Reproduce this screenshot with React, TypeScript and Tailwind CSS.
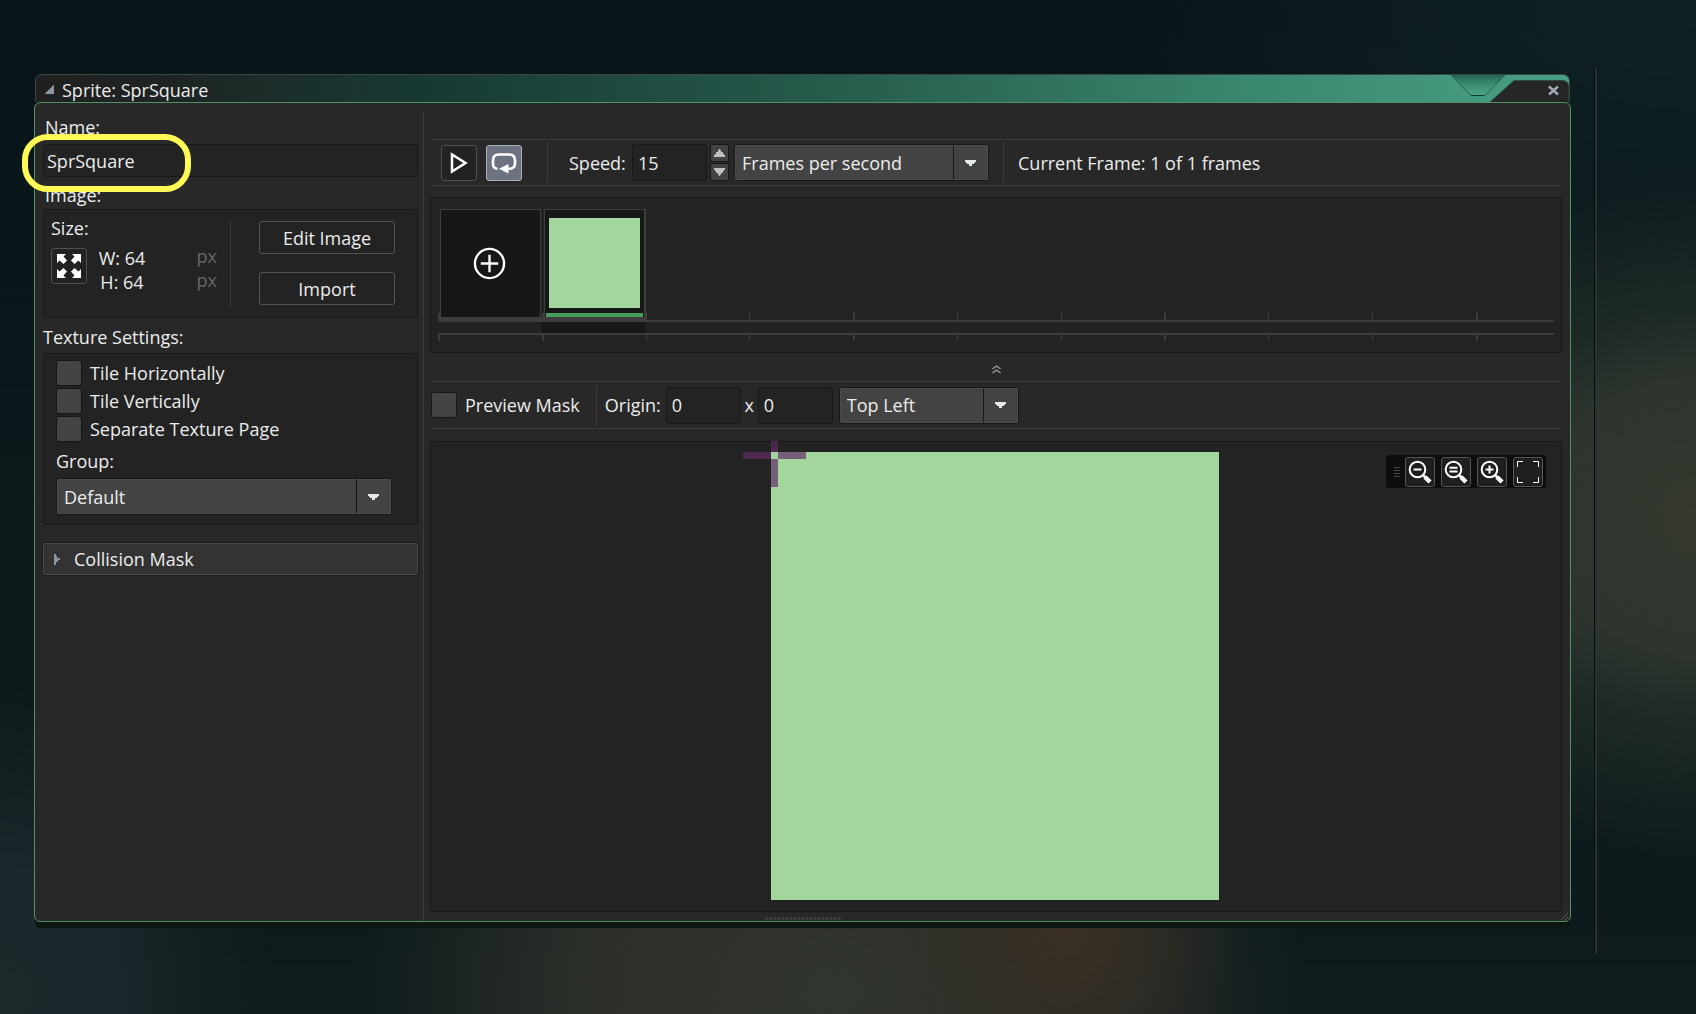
import type { ReactNode } from "react";

const inset = "rounded-[3px] border border-[#181818] bg-[#232323]";

function Arrow() {
  return (
    <svg width="11" height="6" viewBox="0 0 11 6" fill="#e3e9e8" aria-hidden="true">
      <path d="M0 0H11V2H10V3H9V4H7V6H4V4H2V3H1V2H0Z" />
    </svg>
  );
}

function Dropdown({ label, options, className }: { label: string; options: string[]; className: string }) {
  return (
    <div className={`relative flex h-[37px] rounded-[3px] border border-[#181818] bg-[#434343] ${className}`}>
      <select
        aria-label={label}
        className="w-full appearance-none rounded-[2px] border border-[#4c4c4c] bg-transparent pr-9 pl-1.5 text-lg outline-none"
      >
        {options.map((o) => (
          <option key={o}>{o}</option>
        ))}
      </select>
      <span className="pointer-events-none absolute inset-y-0 right-0 flex w-[35px] items-center justify-center rounded-r-[2px] border border-l-[#181818] border-[#4c4c4c]">
        <Arrow />
      </span>
    </div>
  );
}

function Check({ label }: { label: string }) {
  return (
    <label className="flex items-center gap-2 leading-7">
      <input
        type="checkbox"
        className="size-[26px] shrink-0 appearance-none rounded-[3px] border border-[#171717] bg-[#434544] checked:bg-[#6c7280]"
      />
      {label}
    </label>
  );
}

function IconButton({ label, active, children }: { label: string; active?: boolean; children: ReactNode }) {
  return (
    <button
      aria-label={label}
      aria-pressed={active}
      className={`flex size-9 items-center justify-center rounded-[3px] border ${
        active ? "border-[#a9adb5] bg-[#6c7280]" : "border-[#505050] bg-[#222222]"
      }`}
    >
      {children}
    </button>
  );
}

function ToolButton({ label, children }: { label: string; children: ReactNode }) {
  return (
    <button
      aria-label={label}
      className="flex size-[30px] items-center justify-center rounded-[3px] border border-[#555555] bg-[#1f1f1f]"
    >
      {children}
    </button>
  );
}

function Magnifier({ children }: { children: ReactNode }) {
  return (
    <svg width="24" height="24" viewBox="0 0 24 24" fill="none" stroke="#fff" strokeWidth="2" aria-hidden="true">
      <circle cx="9.5" cy="9.5" r="7.8" />
      <path d="M15 15L18 18" strokeWidth="2.5" />
      <path d="M17 17L22 22" strokeWidth="4.5" />
      {children}
    </svg>
  );
}

function Separator({ className }: { className: string }) {
  return <span className={`h-[39px] w-px bg-[#3c3c3c] ${className}`} />;
}

function Ruler() {
  const ticks = Array.from({ length: 11 }, (_, i) => ({
    x: Math.round(i * 103.75),
    w: i % 3 === 1 || i === 0 ? 2 : 1,
  }));
  return (
    <svg className="-mt-[5px] h-[28px] w-full" fill="#3d3d3d" aria-hidden="true">
      <rect x="104" y="9" width="104" height="11" fill="#171717" />
      <rect y="5" width="208" height="4" />
      <rect y="7" width="100%" height="2" />
      <rect y="20" width="100%" height="2" />
      {ticks.map((t) => (
        <g key={t.x}>
          <rect x={t.x} y="0" width={t.w} height="7" />
          <rect x={t.x} y="21" width={t.w} height="7" />
        </g>
      ))}
    </svg>
  );
}

function TitleBar() {
  return (
    <header className="relative mx-px flex h-7 items-center overflow-hidden rounded-t-[7px] border border-b-0 border-[#3c4543] bg-[linear-gradient(90deg,#202020_0%,#1e2423_8%,#183a34_26%,#28604f_55%,#3b8870_80%,#47a083_100%)] pt-[2px] pl-[9px]">
      <svg width="9" height="9" viewBox="0 0 9 9" fill="#8b94a1" aria-hidden="true">
        <path d="M8 0H9V9H0V8H1V7H2V6H3V5H4V4H5V3H6V2H7V1H8Z" />
      </svg>
      <h1 className="ml-2 text-lg leading-7">Sprite: SprSquare</h1>
      <svg className="absolute top-0 right-0" width="120" height="28" viewBox="0 0 120 28" aria-hidden="true">
        <defs>
          <linearGradient id="notch" x1="0" y1="0" x2="0" y2="1">
            <stop offset="0" stopColor="#256552" />
            <stop offset="0.45" stopColor="#3b8c72" />
            <stop offset="1" stopColor="#4aa587" />
          </linearGradient>
        </defs>
        <path d="M2 0L22 20.500H36L56 0Z" fill="url(#notch)" stroke="#256350" />
        <path d="M22 20.500H35" stroke="#10382c" />
        <path d="M40 28L65 5.500H113Q119 5.500 120 11V28Z" fill="#272627" stroke="#2f4b42" />
      </svg>
      <button aria-label="Close" className="absolute top-[10px] right-[10px]">
        <svg width="11" height="11" viewBox="0 0 11 11" stroke="#a3a8b4" strokeWidth="2.4" aria-hidden="true">
          <path d="M1 1.500L10 9.500M10 1.500L1 9.500" />
        </svg>
      </button>
    </header>
  );
}

function Sidebar() {
  return (
    <aside className="flex w-[389px] shrink-0 flex-col border-r border-[#3c3c3c] pr-[5px] pl-2">
      <label htmlFor="sprite-name" className="mt-[2px] ml-[2px] h-7 leading-7">
        Name:
      </label>
      <div className="relative mt-[3px]">
        <input
          id="sprite-name"
          defaultValue="SprSquare"
          className={`h-[33px] w-full px-[3px] outline-none ${inset}`}
        />
        <span className="pointer-events-none absolute -top-[10px] -left-[21px] h-[58px] w-[169px] rounded-[26px] border-6 border-[#fffa55]" />
      </div>
      <h2 className="ml-[2px] h-8 leading-9">Image:</h2>
      <section className={`flex h-[109px] ${inset}`}>
        <div className="my-[10px] w-[187px] border-r border-[#3c3c3c] pl-[7px]">
          <p className="-mt-1 leading-6">Size:</p>
          <div className="mt-2 flex gap-[11px]">
            <IconButton label="Resize sprite">
              <svg width="26" height="26" viewBox="0 0 26 26" fill="#fff" aria-hidden="true">
                {[0, 90, 180, 270].map((r) => (
                  <path key={r} transform={`rotate(${r} 13 13)`} d="M1 1H10L7.500 3.500L11 7.500L7.500 11L3.500 7.500L1 10Z" />
                ))}
              </svg>
            </IconButton>
            <dl className="-mt-[2px] grid flex-1 grid-cols-[48px_1fr] text-center leading-6">
              <dt>W: 64</dt>
              <dd className="pr-[13px] text-right leading-5 text-[#666666]">px</dd>
              <dt>H: 64</dt>
              <dd className="pr-[13px] text-right leading-5 text-[#666666]">px</dd>
            </dl>
          </div>
        </div>
        <div className="flex flex-1 flex-col gap-[18px] pt-[11px] pl-7">
          <button className="h-[33px] w-[136px] rounded-[3px] border border-[#555555]">Edit Image</button>
          <button className="h-[33px] w-[136px] rounded-[3px] border border-[#555555]">Import</button>
        </div>
      </section>
      <h2 className="h-[35px] leading-[38px]">Texture Settings:</h2>
      <section className={`h-[172px] pt-[5px] pl-3 ${inset}`}>
        <Check label="Tile Horizontally" />
        <Check label="Tile Vertically" />
        <Check label="Separate Texture Page" />
        <p className="h-[35px] leading-9">Group:</p>
        <Dropdown label="Group" options={["Default"]} className="w-[336px]" />
      </section>
      <button className="mt-[18px] flex h-8 items-center gap-[14px] rounded-[2px] border border-[#4a4a4a] bg-[#333333] pl-[10px] outline outline-[#1b1b1b]">
        <svg width="6" height="11" viewBox="0 0 6 11" fill="#8b94a1" aria-hidden="true">
          <path d="M0 0H2V2H3V4H6V6H4V8H2V11H0Z" />
        </svg>
        Collision Mask
      </button>
    </aside>
  );
}

function Spinner() {
  return (
    <div className="ml-[3px] flex flex-col gap-px">
      <button aria-label="Increase speed" className="flex h-[18px] w-[19px] items-center justify-center rounded-[2px] border border-[#181818] bg-[#434343]">
        <svg width="11" height="8" viewBox="0 0 11 8" fill="#bfc1c1" aria-hidden="true">
          <path d="M5 0H6V1H7V3H9V5H10V6H11V8H0V6H1V5H2V3H4V1H5Z" />
        </svg>
      </button>
      <button aria-label="Decrease speed" className="flex h-[18px] w-[19px] items-center justify-center rounded-[2px] border border-[#181818] bg-[#434343]">
        <svg width="11" height="8" viewBox="0 0 11 8" fill="#bfc1c1" aria-hidden="true">
          <path d="M5 8H6V7H7V5H9V3H10V2H11V0H0V2H1V3H2V5H4V7H5Z" />
        </svg>
      </button>
    </div>
  );
}

function Playback() {
  return (
    <div className="mt-[28px] flex h-[47px] items-center border-y border-[#3c3c3c] pl-[11px]">
      <div className="flex gap-[9px]">
        <IconButton label="Play">
          <svg width="18" height="22" viewBox="0 0 18 22" fill="none" stroke="#fff" strokeWidth="2.5" aria-hidden="true">
            <path d="M2 2.500V19.500L15.500 11Z" />
          </svg>
        </IconButton>
        <IconButton label="Loop" active>
          <svg width="26" height="22" viewBox="0 0 26 22" fill="none" stroke="#fff" strokeWidth="2.6" aria-hidden="true">
            <path d="M6.500 16.700C3.500 16.700 2 15 2 12V8.500C2 4.500 4 2.500 8 2.500H18C22 2.500 24 4.500 24 8.500V11.500C24 15 22 16.700 18.500 16.700H15" />
            <path d="M8 16.700L17.500 12V21.500Z" fill="#fff" stroke="none" />
          </svg>
        </IconButton>
      </div>
      <Separator className="ml-[25px]" />
      <label htmlFor="speed" className="ml-[21px] w-[63px]">Speed:</label>
      <input id="speed" defaultValue="15" className={`h-[37px] w-[75px] px-[5px] outline-none ${inset}`} />
      <Spinner />
      <Dropdown label="Speed unit" options={["Frames per second", "Frames per game frame"]} className="ml-[5px] w-[255px]" />
      <Separator className="ml-[14px]" />
      <p className="ml-[14px]">Current Frame: 1 of 1 frames</p>
    </div>
  );
}

function Timeline() {
  return (
    <section aria-label="Frames" className={`mt-[11px] h-[156px] pt-[11px] pr-[7px] pl-[7px] ${inset}`}>
      <div className="flex gap-[3px] pl-[2px]">
        <button
          aria-label="Add frame"
          className="flex h-[109px] w-[101px] items-center justify-center border border-[#3d3d3d] bg-[#171717] pr-[2px]"
        >
          <svg width="33" height="33" viewBox="0 0 34 34" fill="none" stroke="#fff" strokeWidth="2.4" aria-hidden="true">
            <circle cx="17" cy="17" r="15" />
            <path d="M17 8V26M8 17H26" />
          </svg>
        </button>
        <button
          aria-label="Frame 1"
          className="flex h-[109px] w-[102px] flex-col items-center justify-between border border-r-2 border-[#3d3d3d] bg-[#171717] pt-2"
        >
          <span className="h-[90px] w-[91px] bg-[#a3d69d]" />
          <span className="h-1 w-[97px] bg-[#479b5b]" />
        </button>
      </div>
      <Ruler />
    </section>
  );
}

function OriginBar() {
  return (
    <div className="flex h-[48px] items-center border-y border-[#3c3c3c] pl-px">
      <Check label="Preview Mask" />
      <Separator className="ml-4" />
      <label htmlFor="origin-x" className="ml-2 w-[61px]">Origin:</label>
      <input id="origin-x" defaultValue="0" className={`h-[37px] w-[75px] px-[5px] outline-none ${inset}`} />
      <label htmlFor="origin-y" className="w-[17px] text-center">x</label>
      <input id="origin-y" defaultValue="0" className={`h-[37px] w-[75px] px-[5px] outline-none ${inset}`} />
      <Dropdown label="Origin preset" options={["Top Left", "Middle Centre", "Custom"]} className="ml-[6px] w-[180px]" />
    </div>
  );
}

function Canvas() {
  return (
    <section aria-label="Sprite preview" className={`relative mt-3 flex justify-center pt-[10px] pr-[2px] pb-[11px] ${inset}`}>
      <div className="relative size-[448px] bg-[#a3d69d]">
        <svg className="absolute -top-[11px] -left-[28px]" width="63" height="46" viewBox="0 0 63 46" aria-hidden="true">
          <path d="M0 11H28V18H0ZM28 0H35V11H28Z" fill="#4d2950" />
          <path d="M35 11H63V18H35ZM28 18H35V46H28Z" fill="#775f79" />
        </svg>
      </div>
      <div className="absolute top-[13px] right-[15px] flex h-[33px] items-center gap-[6px] rounded-[3px] bg-[#0e0e0e] pr-[3px] pl-2">
        <svg className="-mr-px" width="6" height="12" viewBox="0 0 6 12" stroke="#4c4c4c" aria-hidden="true">
          <path d="M0 1.500H6M0 4.500H6M0 7.500H6M0 10.500H6" />
        </svg>
        <ToolButton label="Zoom out"><Magnifier><path d="M5.500 9.500H13.500" /></Magnifier></ToolButton>
        <ToolButton label="Reset zoom"><Magnifier><path d="M5.500 7.700H13.500M5.500 11.500H13.500" /></Magnifier></ToolButton>
        <ToolButton label="Zoom in"><Magnifier><path d="M5.500 9.500H13.500M9.500 5.500V13.500" /></Magnifier></ToolButton>
        <ToolButton label="Fit to window">
          <svg width="22" height="22" viewBox="0 0 22 22" fill="none" stroke="#fff" aria-hidden="true">
            <path d="M.5 6V.5H6M16 .5H21.500V6M21.500 16V21.500H16M6 21.500H.5V16" />
          </svg>
        </ToolButton>
      </div>
    </section>
  );
}

export default function App() {
  return (
    <div className="flex min-h-screen items-start bg-[#0b1a1c] bg-[radial-gradient(ellipse_26%_34%_at_101%_51%,#35382f_0%,#2d352d_40%,#2b342c99_60%,transparent_100%),radial-gradient(ellipse_10%_16%_at_63%_92%,#3a3024_0%,#352d2599_50%,transparent_100%),radial-gradient(ellipse_28%_40%_at_49%_98%,#30352d_0%,#2d302a_50%,transparent_100%),radial-gradient(ellipse_16%_30%_at_0%_98%,#1b2a2b_0%,#19282a_40%,transparent_100%),radial-gradient(ellipse_40%_40%_at_100%_0%,#0f2223_0%,transparent_100%),linear-gradient(180deg,#07141a_0%,#0b1a1b_50%,#0f1b1d_100%)] pt-[69px] pr-[99px] pl-[34px] font-['Open_Sans',sans-serif] text-lg text-[#ececec]">
      <main className="mt-[5px] min-w-0 flex-1">
        <TitleBar />
        <div className="relative flex rounded-[6px] border border-[#4f9362] bg-[#282828] pt-[8px] shadow-[0_7px_0_-1px_#0c1613]">
          <Sidebar />
          <div className="flex min-w-0 flex-1 flex-col pr-2 pb-[9px] pl-[6px]">
            <Playback />
            <Timeline />
            <button aria-label="Collapse timeline" className="flex h-[28px] items-center justify-center pt-1">
              <svg width="9" height="9" viewBox="0 0 9 9" fill="none" stroke="#a0a0a0" strokeWidth="1.200" aria-hidden="true">
                <path d="M.5 4L4.500 1L8.500 4M.5 8L4.500 5L8.500 8" />
              </svg>
            </button>
            <OriginBar />
            <Canvas />
          </div>
          <span className="absolute bottom-[1px] left-1/2 h-[3px] w-[78px] -translate-x-1/2 bg-[repeating-conic-gradient(#4c4c4c_0_25%,#222222_0_50%)] bg-size-[4px_2px]" />
          <svg className="absolute right-[2px] bottom-[1px]" width="7" height="7" viewBox="0 0 7 7" stroke="#5a5a5a" aria-hidden="true">
            <path d="M0 7L7 0M4 7L7 4" />
          </svg>
        </div>
      </main>
      <span className="ml-[23px] h-[885px] w-[3px] border-x border-l-[#050d0e] border-r-[#2a3130] bg-[#2a3130]" />
    </div>
  );
}
